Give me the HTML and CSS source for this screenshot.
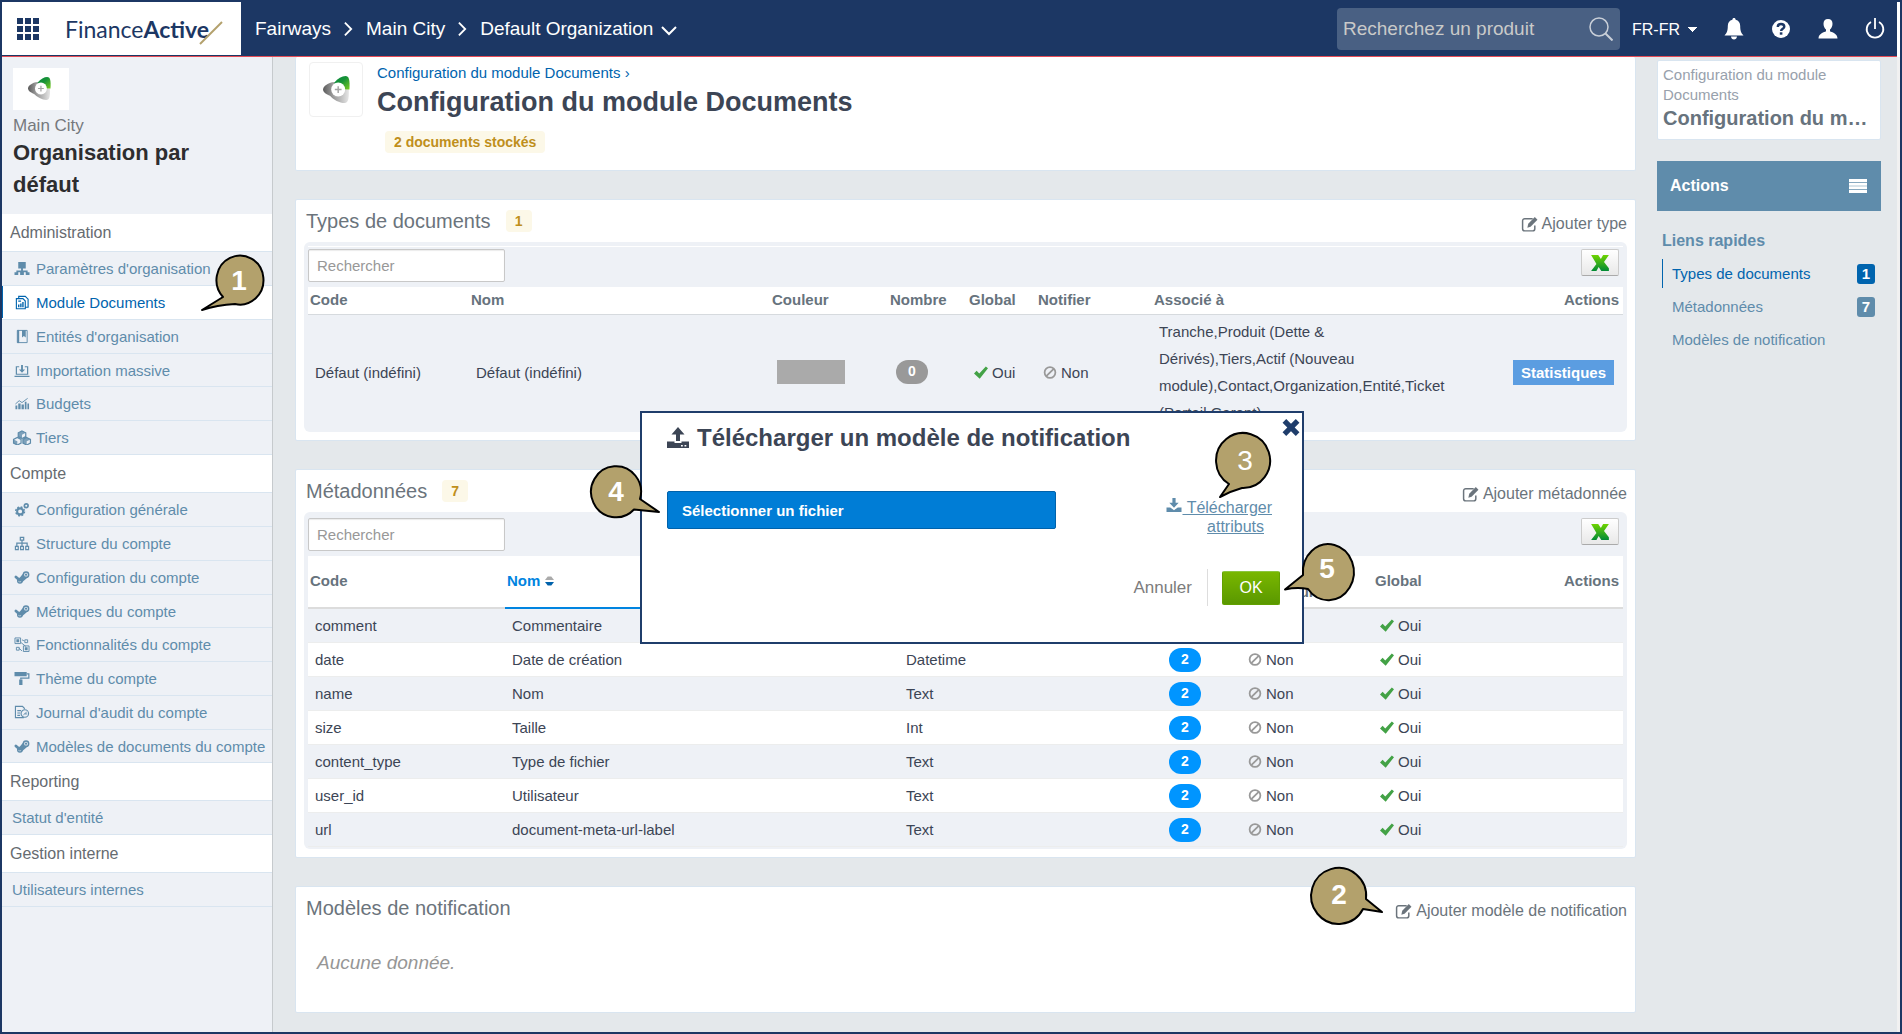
FILE: index.html
```html
<!DOCTYPE html>
<html lang="fr">
<head>
    <meta charset="UTF-8">
    <meta name="viewport" content="width=device-width, initial-scale=1.0">
    <title>Configuration du module Documents</title>
    <link rel="stylesheet" href="styles.css">
</head>
<body>

<!-- Icon sprite -->
<svg class="sprite" aria-hidden="true">
    <defs>
        <linearGradient id="greenFill" x1="0" y1="0" x2="1" y2="1">
            <stop offset="0" stop-color="#0a8a3c"/>
            <stop offset="0.45" stop-color="#169238"/>
            <stop offset="1" stop-color="#7ccb22"/>
        </linearGradient>
        <linearGradient id="greyFill" x1="0" y1="0" x2="1" y2="0">
            <stop offset="0" stop-color="#5a5a5a"/>
            <stop offset="1" stop-color="#b5b5b5"/>
        </linearGradient>
        <linearGradient id="lightFill" x1="0" y1="0" x2="1" y2="0">
            <stop offset="0" stop-color="#868686"/>
            <stop offset="1" stop-color="#e6e6e6"/>
        </linearGradient>
        <linearGradient id="excelFill" x1="0" y1="0" x2="0" y2="1">
            <stop offset="0" stop-color="#6fd400"/>
            <stop offset="1" stop-color="#008a35"/>
        </linearGradient>
    </defs>
    <symbol id="brand" viewBox="0 0 24 24">
        <path fill="url(#lightFill)" d="M6 17C9 21 15 24 19 24c4 0 4-5 4-12H13z"/>
        <path fill="url(#greyFill)" d="M12 5C7 5 0 8 0 12c0 3 5 6 12 7z"/>
        <path fill="url(#greenFill)" d="M10 6C13 2 17 0 20 0c3 0 4 3 3.500 12H13z"/>
        <circle cx="13.500" cy="12" r="6.200" fill="#fff"/>
        <path stroke="#a5a5a5" stroke-width="1.300" d="M13.500 9v6M10.500 12h6"/>
    </symbol>
    <symbol id="chevron" viewBox="0 0 10 16"><path fill="none" stroke="#fff" stroke-width="2" d="M1 1l7 7-7 7"/></symbol>
    <symbol id="chevron-down" viewBox="0 0 16 10"><path fill="none" stroke="#fff" stroke-width="2" d="M1 1l7 7 7-7"/></symbol>
    <symbol id="search" viewBox="0 0 24 24"><circle cx="10" cy="10" r="9" fill="none" stroke="currentColor" stroke-width="1.500"/><path stroke="currentColor" stroke-width="2" d="M16.500 16.500l7 7"/></symbol>
    <symbol id="bell" viewBox="0 0 20 22"><path fill="currentColor" d="M10 0c1 0 1.600.7 1.600 1.700 3 .7 4.600 3 4.600 6.300 0 5 1 7 3.300 9.500H.5C2.800 15 3.800 13 3.800 8c0-3.300 1.600-5.600 4.600-6.300C8.400.7 9 0 10 0zM7 18.500h6c-.2 1.800-1.400 3-3 3s-2.800-1.200-3-3z"/></symbol>
    <symbol id="help" viewBox="0 0 20 20"><circle cx="10" cy="10" r="9" fill="currentColor"/><path fill="none" stroke="#1c3764" stroke-width="2.400" d="M6.800 8c0-2 1.300-3 3.200-3s3.300 1 3.300 2.700c0 2-3.200 2.200-3.200 4.300"/><path fill="#1c3764" d="M8.800 13.300h2.600v2.400H8.800z"/></symbol>
    <symbol id="user" viewBox="0 0 20 20"><path fill="currentColor" d="M10 0c3 0 4.500 2 4.500 4.800 0 2.400-1 4.500-2.500 5.700v1.800c1.500 1 7.500 2 7.500 7.200H.5c0-5.200 6-6.200 7.500-7.200v-1.800C6.500 9.300 5.500 7.200 5.500 4.800 5.500 2 7 0 10 0z"/></symbol>
    <symbol id="power" viewBox="0 0 20 22"><path fill="none" stroke="currentColor" stroke-width="1.800" d="M6 4a8.300 8.300 0 1 0 8 0M10 0v11"/></symbol>
    <symbol id="edit" viewBox="0 0 16 16"><path fill="none" stroke="currentColor" stroke-width="1.400" d="M11 2.500H3.500c-1 0-2 .8-2 2V12c0 1.200 1 2 2 2H11c1.200 0 2-.8 2-2V9"/><path fill="currentColor" d="M13 1l2.500 2.500-6.500 6.500L6 11l.8-3.600z"/></symbol>
    <symbol id="excel" viewBox="0 0 20 18"><path fill="url(#excelFill)" d="M0 0h8l3 4.500L13.500 0H20l-5.500 8 5.500 7v3h-8.500l-3-4.500L6 18H0l6-8z"/></symbol>
    <symbol id="check" viewBox="0 0 16 14"><path fill="#43a246" d="M0 8l3-3 3 3 7.500-8L16 2.200 6.500 14z"/></symbol>
    <symbol id="ban" viewBox="0 0 14 14"><circle cx="7" cy="7" r="5.800" fill="none" stroke="#999" stroke-width="1.900"/><path stroke="#999" stroke-width="1.900" d="M3 11l8-8"/></symbol>
    <symbol id="sort" viewBox="0 0 10 12"><path fill="#aaa" d="M0 5l3-4h4l3 4z"/><path fill="#0062ab" d="M0 7h10l-3 4H3z"/></symbol>
    <symbol id="upload" viewBox="0 0 22 22"><path fill="currentColor" d="M11 0l6.500 7.500H13V14H9V7.500H4.500zM0 14.500h7.500V16h7v-1.500H22V21H0z"/><path stroke="#fff" stroke-width="1.500" d="M14 18.700h1.800M17.500 18.700h1.800"/></symbol>
    <symbol id="download" viewBox="0 0 16 16"><path fill="currentColor" d="M6.300 0h3.400v5H13l-5 5.500L3 5h3.300zM0 10h4l4 3 4-3h4v5H0z"/></symbol>
    <symbol id="close" viewBox="0 0 18 18"><path fill="none" stroke="currentColor" stroke-width="5.500" d="M2 2l14 14M16 2L2 16"/></symbol>
    <symbol id="list" viewBox="0 0 18 14"><path stroke="currentColor" stroke-width="3" d="M0 1.500h18M0 5.200h18M0 8.800h18M0 12.500h18"/></symbol>
    <!-- Sidebar icons -->
    <symbol id="org" viewBox="0 0 16 16"><path fill="currentColor" d="M4 1h8v7H4zM7 8h2v2h5v2H2v-2h5zM0 12h4v3H0zM6 12h4v3H6zM12 12h4v3h-4z"/></symbol>
    <symbol id="docs" viewBox="0 0 16 16"><path fill="none" stroke="currentColor" stroke-width="1.200" d="M4.500 4V1.500h7l3 3V13H12M2 3.800h7l2.500 2.700v8.200H2z"/><path fill="none" stroke="currentColor" stroke-width="1.500" d="M4.500 13v-3M6.800 13V9M9 13V7.500M4 6.500h3"/></symbol>
    <symbol id="book" viewBox="0 0 16 16"><path fill="none" stroke="currentColor" stroke-width="2" d="M4 1v14"/><path fill="none" stroke="currentColor" d="M3 1.500h10.500v13H3z"/><path fill="currentColor" d="M8 1h4v8L10 7.500 8 9z"/></symbol>
    <symbol id="import" viewBox="0 0 16 16"><path fill="none" stroke="currentColor" stroke-width="1.300" d="M5 4H2v8h12V4h-3M0 14.300h16"/><path fill="currentColor" d="M7 2h2v5h2.300L8 10.500 4.700 7H7z"/></symbol>
    <symbol id="chart" viewBox="0 0 16 16"><path fill="currentColor" d="M1 10h2v4H1zM4 8h2.500v6H4zM7.500 9H10v5H7.500zM11 6h1.800v8H11zM13.800 8h1.700v6h-1.700z"/><path fill="none" stroke="currentColor" d="M1 8.500l4-3.500 3 2 6-4.500"/></symbol>
    <symbol id="cubes" viewBox="0 0 20 16"><path fill="none" stroke="currentColor" stroke-width="1.300" d="M10 1l4 2v4l-4 2-4-2V3z M5 8l4 2v4l-4 2-4-2v-4z M15 8l4 2v4l-4 2-4-2v-4z"/><path fill="currentColor" d="M6 3l4 2v4L6 7zM1 10l4 2v4l-4-2zM11 10l4 2v4l-4-2zM10 1l4 2-4 2-4-2zM15 8l4 2-4 2-4-2z" opacity=".8"/></symbol>
    <symbol id="gears" viewBox="0 0 16 16"><circle cx="6" cy="10" r="3.200" fill="none" stroke="currentColor" stroke-width="2.200"/><circle cx="6" cy="10" r="4.700" fill="none" stroke="currentColor" stroke-width="1.500" stroke-dasharray="2 1.700"/><circle cx="12.500" cy="4" r="2" fill="none" stroke="currentColor" stroke-width="1.800"/></symbol>
    <symbol id="tree" viewBox="0 0 16 16"><path fill="none" stroke="currentColor" stroke-width="1.300" d="M6.200 1.500h3.600v3H6.200zM8 4.500V11M2.500 11V7.500h11V11M1 11h3v3.500H1zM6.500 11h3v3.500h-3zM12 11h3v3.500h-3z"/></symbol>
    <symbol id="steam" viewBox="0 0 16 16"><path stroke="currentColor" stroke-width="3" stroke-linecap="round" d="M1.500 7.500l4 3.500"/><path fill="currentColor" d="M9 4l5 4-6 5-4-3z"/><circle cx="5.800" cy="11.500" r="2.400" fill="none" stroke="currentColor" stroke-width="1.500"/><circle cx="12.300" cy="5" r="2.800" fill="#eef1f6" stroke="currentColor" stroke-width="1.600"/><circle cx="12.300" cy="5" r="1.200" fill="currentColor"/></symbol>
    <symbol id="features" viewBox="0 0 16 16"><path fill="none" stroke="currentColor" d="M.5 1h6v6h-6zM9.500 9.500h6v6h-6zM11 3h3v3h-3zM2 11h3v3H2zM7 6l5 4M8 3l2 1M5 12l3 3"/><path fill="currentColor" d="M2 2.500h3v3H2zM11 11h3v3h-3z"/></symbol>
    <symbol id="roller" viewBox="0 0 16 16"><path fill="currentColor" d="M0 1h13v4.500H0zM5 9h3.500v6H5z"/><path fill="none" stroke="currentColor" stroke-width="1.300" d="M13 3h2.300v4.500H6.700V9"/></symbol>
    <symbol id="journal" viewBox="0 0 16 16"><path fill="none" stroke="currentColor" stroke-width="1.200" d="M10 13.500H1V1.500h7.500L11 4M3 6h4M3 8.500h3M3 11h3"/><circle cx="11" cy="9" r="4" fill="none" stroke="currentColor" stroke-width="1.200"/><path fill="none" stroke="currentColor" d="M9.500 10.500L13 7.500M11 9.500h2.500"/></symbol>
</svg>

<!-- Top bar -->
<header class="topbar">
    <div class="topbar-logo">
        <button class="apps" type="button" aria-label="Applications">
            <i></i><i></i><i></i><i></i><i></i><i></i><i></i><i></i><i></i>
        </button>
        <a class="wordmark" href="#">Finance<b>Active</b></a>
        <svg class="slash" viewBox="0 0 24 24"><path stroke="#b3a16c" stroke-width="2" d="M1 23L23 1"/></svg>
    </div>
    <nav class="crumbs">
        <a href="#">Fairways</a>
        <svg class="crumb-sep"><use href="#chevron"/></svg>
        <a href="#">Main City</a>
        <svg class="crumb-sep"><use href="#chevron"/></svg>
        <a class="crumb-current" href="#">Default Organization <svg class="crumb-down"><use href="#chevron-down"/></svg></a>
    </nav>
    <div class="product-search">
        <input type="text" placeholder="Recherchez un produit" aria-label="Recherchez un produit">
        <svg><use href="#search"/></svg>
    </div>
    <select class="lang" aria-label="Langue"><option>FR-FR</option></select>
    <div class="tools">
        <a href="#" aria-label="Notifications"><svg><use href="#bell"/></svg></a>
        <a href="#" aria-label="Aide"><svg><use href="#help"/></svg></a>
        <a href="#" aria-label="Profil"><svg><use href="#user"/></svg></a>
        <a href="#" aria-label="Déconnexion"><svg><use href="#power"/></svg></a>
    </div>
</header>

<div class="layout">

    <!-- Sidebar -->
    <aside class="sidebar">
        <div class="org">
            <div class="org-logo"><svg><use href="#brand"/></svg></div>
            <div class="org-parent">Main City</div>
            <h2>Organisation par défaut</h2>
        </div>
        <nav>
            <h3>Administration</h3>
            <ul>
                <li><a href="#"><svg><use href="#org"/></svg>Paramètres d'organisation</a></li>
                <li class="active">
                    <a href="#"><svg><use href="#docs"/></svg>Module Documents</a>
                    <svg class="callout callout-1" viewBox="-45 -32 90 70">
                        <path d="M-16 17A23.500 24.500 0 1 1-4 24Q-22 25-37 30Z"/><text y="10">1</text>
                    </svg>
                </li>
                <li><a href="#"><svg><use href="#book"/></svg>Entités d'organisation</a></li>
                <li><a href="#"><svg><use href="#import"/></svg>Importation massive</a></li>
                <li><a href="#"><svg><use href="#chart"/></svg>Budgets</a></li>
                <li><a href="#"><svg><use href="#cubes"/></svg>Tiers</a></li>
            </ul>
            <h3>Compte</h3>
            <ul>
                <li><a href="#"><svg><use href="#gears"/></svg>Configuration générale</a></li>
                <li><a href="#"><svg><use href="#tree"/></svg>Structure du compte</a></li>
                <li><a href="#"><svg><use href="#steam"/></svg>Configuration du compte</a></li>
                <li><a href="#"><svg><use href="#steam"/></svg>Métriques du compte</a></li>
                <li><a href="#"><svg><use href="#features"/></svg>Fonctionnalités du compte</a></li>
                <li><a href="#"><svg><use href="#roller"/></svg>Thème du compte</a></li>
                <li><a href="#"><svg><use href="#journal"/></svg>Journal d'audit du compte</a></li>
                <li><a href="#"><svg><use href="#steam"/></svg>Modèles de documents du compte</a></li>
            </ul>
            <h3>Reporting</h3>
            <ul>
                <li><a href="#">Statut d'entité</a></li>
            </ul>
            <h3>Gestion interne</h3>
            <ul>
                <li><a href="#">Utilisateurs internes</a></li>
            </ul>
        </nav>
    </aside>

    <!-- Main content -->
    <main class="content">
        <section class="card card-title">
            <div class="module-logo"><svg><use href="#brand"/></svg></div>
            <div>
                <a class="back" href="#">Configuration du module Documents ›</a>
                <h1>Configuration du module Documents</h1>
                <span class="tag tag-stock">2 documents stockés</span>
            </div>
        </section>

        <section class="card">
            <div class="card-head">
                <h2>Types de documents</h2>
                <span class="tag">1</span>
                <a class="add" href="#"><svg><use href="#edit"/></svg>Ajouter type</a>
            </div>
            <div class="panel panel-types">
                <div class="panel-bar">
                    <input type="text" placeholder="Rechercher" aria-label="Rechercher un type">
                    <button class="export" type="button" aria-label="Exporter vers Excel"><svg><use href="#excel"/></svg></button>
                </div>
                <table>
                    <colgroup>
                        <col class="w-code"><col><col class="w-color"><col class="w-count"><col class="w-bool"><col class="w-notify"><col class="w-assoc"><col class="w-actions">
                    </colgroup>
                    <thead>
                        <tr><th>Code</th><th>Nom</th><th>Couleur</th><th>Nombre</th><th>Global</th><th>Notifier</th><th>Associé à</th><th class="right">Actions</th></tr>
                    </thead>
                    <tbody>
                        <tr>
                            <td>Défaut (indéfini)</td>
                            <td>Défaut (indéfini)</td>
                            <td><span class="swatch"></span></td>
                            <td><span class="pill pill-grey">0</span></td>
                            <td><svg class="mark"><use href="#check"/></svg>Oui</td>
                            <td><svg class="mark"><use href="#ban"/></svg>Non</td>
                            <td>Tranche,Produit (Dette &amp; Dérivés),Tiers,Actif (Nouveau module),Contact,Organization,Entité,Ticket (Portail Garant)</td>
                            <td class="right"><button class="btn-stats" type="button">Statistiques</button></td>
                        </tr>
                    </tbody>
                </table>
            </div>
        </section>

        <section class="card">
            <div class="card-head">
                <h2>Métadonnées</h2>
                <span class="tag">7</span>
                <a class="add" href="#"><svg><use href="#edit"/></svg>Ajouter métadonnée</a>
            </div>
            <div class="panel panel-meta">
                <div class="panel-bar">
                    <input type="text" placeholder="Rechercher" aria-label="Rechercher une métadonnée">
                    <button class="export" type="button" aria-label="Exporter vers Excel"><svg><use href="#excel"/></svg></button>
                </div>
                <table>
                    <colgroup>
                        <col class="w-search"><col><col class="w-type"><col class="w-number"><col class="w-user"><col class="w-global"><col class="w-last">
                    </colgroup>
                    <thead>
                        <tr><th>Code</th><th class="sorted">Nom <svg><use href="#sort"/></svg></th><th>Type</th><th></th><th>Valeur<br>utilisateur</th><th>Global</th><th class="right">Actions</th></tr>
                    </thead>
                    <tbody>
                        <tr><td>comment</td><td>Commentaire</td><td>Text</td><td><span class="pill">2</span></td><td><svg class="mark"><use href="#ban"/></svg>Non</td><td><svg class="mark"><use href="#check"/></svg>Oui</td><td></td></tr>
                        <tr><td>date</td><td>Date de création</td><td>Datetime</td><td><span class="pill">2</span></td><td><svg class="mark"><use href="#ban"/></svg>Non</td><td><svg class="mark"><use href="#check"/></svg>Oui</td><td></td></tr>
                        <tr><td>name</td><td>Nom</td><td>Text</td><td><span class="pill">2</span></td><td><svg class="mark"><use href="#ban"/></svg>Non</td><td><svg class="mark"><use href="#check"/></svg>Oui</td><td></td></tr>
                        <tr><td>size</td><td>Taille</td><td>Int</td><td><span class="pill">2</span></td><td><svg class="mark"><use href="#ban"/></svg>Non</td><td><svg class="mark"><use href="#check"/></svg>Oui</td><td></td></tr>
                        <tr><td>content_type</td><td>Type de fichier</td><td>Text</td><td><span class="pill">2</span></td><td><svg class="mark"><use href="#ban"/></svg>Non</td><td><svg class="mark"><use href="#check"/></svg>Oui</td><td></td></tr>
                        <tr><td>user_id</td><td>Utilisateur</td><td>Text</td><td><span class="pill">2</span></td><td><svg class="mark"><use href="#ban"/></svg>Non</td><td><svg class="mark"><use href="#check"/></svg>Oui</td><td></td></tr>
                        <tr><td>url</td><td>document-meta-url-label</td><td>Text</td><td><span class="pill">2</span></td><td><svg class="mark"><use href="#ban"/></svg>Non</td><td><svg class="mark"><use href="#check"/></svg>Oui</td><td></td></tr>
                    </tbody>
                </table>
            </div>
        </section>

        <section class="card">
            <div class="card-head">
                <h2>Modèles de notification</h2>
                <a class="add" href="#"><svg><use href="#edit"/></svg>Ajouter modèle de notification</a>
            </div>
            <p class="empty">Aucune donnée.</p>
            <svg class="callout callout-2" viewBox="-45 -32 90 70">
                <path d="M27 4A27.500 28 0 1 0 24 14L43 17Z"/><text y="9">2</text>
            </svg>
        </section>
    </main>

    <!-- Right column -->
    <aside class="side">
        <div class="side-title">
            <span>Configuration du module Documents</span>
            <strong>Configuration du module Documents</strong>
        </div>
        <button class="side-actions" type="button">Actions <svg><use href="#list"/></svg></button>
        <h3>Liens rapides</h3>
        <ul>
            <li class="active"><a href="#">Types de documents</a><span>1</span></li>
            <li><a href="#">Métadonnées</a><span>7</span></li>
            <li><a href="#">Modèles de notification</a></li>
        </ul>
    </aside>
</div>

<!-- Upload dialog -->
<div class="modal" role="dialog" aria-labelledby="modalTitle">
    <button class="modal-close" type="button" aria-label="Fermer"><svg><use href="#close"/></svg></button>
    <h2 id="modalTitle"><svg><use href="#upload"/></svg>Télécharger un modèle de notification</h2>
    <div class="modal-row">
        <button class="btn-file" type="button">Sélectionner un fichier</button>
        <a class="attributes" href="#"><svg><use href="#download"/></svg> Télécharger<br><span>attributs</span></a>
    </div>
    <div class="modal-foot">
        <button class="btn-cancel" type="button">Annuler</button>
        <button class="btn-ok" type="button">OK</button>
    </div>
    <svg class="callout callout-3" viewBox="-45 -32 90 70">
        <path d="M-16 23A27 27.500 0 1 1-3 27Q-14 30-25 36Z"/><text class="thin" y="9">3</text>
    </svg>
    <svg class="callout callout-4" viewBox="-45 -32 90 70">
        <path d="M24 7A25 25.500 0 1 0 18 17.500L43 20Z"/><text y="9">4</text>
    </svg>
    <svg class="callout callout-5" viewBox="-45 -32 90 70">
        <path d="M-24 6A25.500 28 0 1 1-19 20Q-30 18-42 20.500Z"/><text y="9">5</text>
    </svg>
</div>

</body>
</html>
```
FILE: styles.css
```css
/* General Styling */
* {
    box-sizing: border-box;
}

body {
    margin: 0;
    min-height: 100vh;
    border: 2px solid #1c3764;
    position: relative;
    display: flex;
    flex-direction: column;
    background: #e4e8eb;
    font-family: "Liberation Sans", Arial, sans-serif;
    font-size: 15px;
    color: #3c4555;
}

h1, h2, h3, p, ul {
    margin: 0;
    padding: 0;
}

ul {
    list-style: none;
}

a {
    color: inherit;
    text-decoration: none;
}

button, input, select {
    font-family: inherit;
    margin: 0;
}

button {
    cursor: pointer;
}

.sprite {
    position: absolute;
    width: 0;
    height: 0;
}

/* Top bar */
.topbar {
    display: flex;
    align-items: center;
    height: 55px;
    margin-right: 3px;
    padding-right: 12px;
    background: #1c3764;
    border-bottom: 1px solid #e64c56;
    box-shadow: 3px 0 #fff;
    color: #fff;
}

.topbar-logo {
    display: flex;
    align-items: center;
    align-self: flex-start;
    width: 239px;
    height: 53px;
    padding-left: 15px;
    background: #fff;
}

.apps {
    display: grid;
    grid-template-columns: repeat(3, 6px);
    gap: 2px;
    padding: 0;
    border: none;
    background: none;
}

.apps i {
    height: 6px;
    background: #1c3764;
}

.wordmark {
    margin-left: 26px;
    font-family: Lato, sans-serif;
    font-size: 23px;
    color: #1c3764;
}

.slash {
    width: 24px;
    height: 24px;
    margin: 8px 0 0 -10px;
}

.crumbs {
    display: flex;
    align-items: center;
    gap: 13px;
    margin-left: 14px;
    font-size: 19px;
}

.crumb-sep {
    width: 9px;
    height: 16px;
}

.crumb-current {
    display: flex;
    align-items: center;
    gap: 8px;
}

.crumb-down {
    width: 16px;
    height: 10px;
    margin-top: 4px;
}

.product-search {
    display: flex;
    align-items: center;
    width: 283px;
    height: 42px;
    margin-left: auto;
    padding: 0 7px 0 6px;
    border-radius: 4px;
    background: #496083;
    color: #c9cfd8;
}

.product-search input {
    flex: 1;
    min-width: 0;
    padding: 0;
    border: none;
    background: none;
    font-size: 19px;
    color: #fff;
}

.product-search input::placeholder {
    color: #c9cac9;
    opacity: 1;
}

.product-search svg {
    width: 24px;
    height: 24px;
}

.lang {
    appearance: none;
    width: 68px;
    margin-left: 12px;
    padding: 0;
    border: none;
    background: conic-gradient(from 315deg at 50% 100%, #fff 90deg, transparent 0) no-repeat right 3px center / 9px 5px;
    font-size: 16px;
    color: #fff;
}

.tools {
    display: flex;
    gap: 27px;
    margin-left: 24px;
}

.tools svg {
    display: block;
    width: 20px;
    height: 22px;
}

/* Columns */
.layout {
    flex: 1;
    display: flex;
    align-items: flex-start;
    padding-right: 16px;
    border-right: 3px solid #f1f1f1;
}

/* Sidebar */
.sidebar {
    align-self: stretch;
    flex: none;
    width: 271px;
    background: #eef1f6;
    border-right: 1px solid #c6cacd;
}

.org {
    padding: 11px 11px 13px;
}

.org-logo {
    display: flex;
    align-items: center;
    justify-content: center;
    width: 56px;
    height: 42px;
    margin-bottom: 5px;
    padding: 0 3px 2px 0;
    background: #fff;
}

.org-logo svg {
    width: 23px;
    height: 23px;
}

.org-parent {
    font-size: 17px;
    line-height: 22px;
    color: #75797d;
}

.org h2 {
    font-size: 22px;
    line-height: 32px;
    color: #2d2d2f;
}

.sidebar h3 {
    height: 38px;
    padding-left: 8px;
    background: #fff;
    border-bottom: 1px solid #d9e5f0;
    font-size: 16px;
    font-weight: normal;
    line-height: 37px;
    color: #666b70;
}

.sidebar li {
    position: relative;
    height: 34px;
    border-bottom: 1px solid #d9e5f0;
}

.sidebar li:nth-child(4n) {
    height: 33px;
}

.sidebar li a {
    display: flex;
    align-items: center;
    gap: 4px;
    height: 32px;
    padding-left: 10px;
    color: #5f8cab;
    white-space: nowrap;
}

.sidebar li a svg {
    width: 20px;
    height: 15px;
}

.sidebar li.active {
    background: #fff;
}

.sidebar li.active a {
    padding-left: 9px;
    border-left: 1px solid #0064ae;
    color: #0064ae;
}

/* Cards */
.content {
    flex: 1;
    min-width: 0;
    display: flex;
    flex-direction: column;
    gap: 28px;
    padding: 0 21px 18px 22px;
}

.card {
    position: relative;
    padding: 0 8px 8px;
    background: #fff;
    border: 1px solid #d9e5f0;
    border-radius: 2px;
}

.card-title {
    display: flex;
    gap: 14px;
    padding: 5px 13px 17px;
    border-top: none;
}

.module-logo {
    display: flex;
    align-items: center;
    justify-content: center;
    width: 54px;
    height: 55px;
    border: 1px solid #f0f0f0;
    border-radius: 4px;
}

.module-logo svg {
    width: 27px;
    height: 27px;
}

.back {
    display: block;
    line-height: 22px;
    color: #0064ae;
}

h1 {
    margin-bottom: 11px;
    font-size: 27px;
    line-height: 36px;
}

.tag {
    display: inline-block;
    min-width: 26px;
    padding: 0 9px;
    border-radius: 4px;
    background: #fcf8e8;
    font-size: 14px;
    font-weight: bold;
    line-height: 22px;
    text-align: center;
    color: #bf8f1c;
}

.tag-stock {
    margin-left: 8px;
}

.card-head {
    display: flex;
    height: 42px;
    padding: 0 0 0 2px;
    line-height: 42px;
}

.card-head h2 {
    font-size: 20px;
    font-weight: normal;
    color: #6b747c;
}

.card-head .tag {
    align-self: center;
    margin-left: 15px;
}

.add {
    display: flex;
    align-items: center;
    gap: 4px;
    height: 48px;
    margin-left: auto;
    font-size: 16px;
    color: #6b747c;
}

.add svg {
    width: 17px;
    height: 17px;
}

.empty {
    height: 75px;
    padding-left: 13px;
    font-size: 19px;
    font-style: italic;
    line-height: 68px;
    color: #969696;
}

/* Panels */
.panel {
    padding: 6px 4px 2px;
    border-radius: 6px;
    background: #eef1f6;
}

.panel-types {
    padding: 4px 4px 3px;
}

.panel-types .panel-bar {
    height: 41px;
    padding-top: 2px;
    border-top: 1px solid #fff;
}

.panel-bar {
    display: flex;
    align-items: flex-start;
    justify-content: space-between;
    height: 38px;
    padding-right: 4px;
}

.panel-bar input {
    width: 197px;
    height: 33px;
    padding: 0 8px;
    border: 1px solid #c8c8c8;
    border-radius: 2px;
    box-shadow: inset 0 1px 1px rgba(0,0,0,0.08);
    font-size: 15px;
}

.panel-bar input::placeholder {
    color: #989898;
    opacity: 1;
}

.export {
    display: flex;
    align-items: center;
    justify-content: center;
    width: 38px;
    height: 27px;
    padding: 0;
    border: 1px solid #ccc;
    border-bottom-color: #aaa;
    border-radius: 2px;
    background: linear-gradient(#fff, #e8e8e8);
}

.export svg {
    width: 20px;
    height: 16px;
}

/* Tables */
table {
    width: 100%;
    table-layout: fixed;
    border-collapse: separate;
    border-spacing: 0;
}

th {
    padding: 2px 4px 3px 2px;
    background: #fff;
    border-bottom: 1px solid #d6dade;
    line-height: 22px;
    text-align: left;
    color: #67737d;
}

td {
    height: 34px;
    padding: 3px 9px 3px 7px;
    border-bottom: 1px solid #eceded;
    line-height: 27px;
}

.right {
    text-align: right;
}

.panel-types td {
    border-bottom: none;
}

.panel-meta th {
    height: 53px;
    border-bottom: 2px solid #dcdcdc;
}

.panel-meta .sorted {
    border-bottom-color: #0084e0;
    color: #0084e0;
}

.sorted svg {
    width: 9px;
    height: 12px;
    vertical-align: -1px;
}

.panel-meta tbody tr:nth-child(even) td {
    background: #fff;
}

.w-code { width: 161px; }
.w-color { width: 118px; }
.w-count { width: 79px; }
.w-bool { width: 69px; }
.w-notify { width: 116px; }
.w-assoc { width: 306px; }
.w-actions { width: 165px; }
.w-search { width: 197px; }
.w-type { width: 262px; }
.w-number { width: 80px; }
.w-user { width: 132px; }
.w-global { width: 130px; }
.w-last { width: 120px; }

.mark {
    width: 14px;
    height: 13px;
    margin-right: 4px;
    vertical-align: -1px;
}

.swatch {
    display: block;
    width: 68px;
    height: 24px;
    background: #aaa;
}

.pill {
    display: block;
    width: 32px;
    height: 24px;
    margin-left: 1px;
    border-radius: 12px;
    background: #0095ff;
    font-size: 14px;
    font-weight: bold;
    line-height: 23px;
    text-align: center;
    color: #fff;
}

.pill-grey {
    background: #999;
}

.btn-stats {
    height: 25px;
    padding: 0 8px;
    border: none;
    background: #5b9de1;
    font-size: 15px;
    font-weight: bold;
    color: #fff;
}

/* Right column */
.side {
    flex: none;
    width: 224px;
    padding-top: 3px;
    color: #5f8cab;
}

.side-title {
    padding: 4px 7px 8px 5px;
    background: #fff;
    border: 1px solid #d9e5f0;
    border-radius: 2px;
    line-height: 20px;
    color: #98a1ac;
}

.side-title span {
    display: block;
}

.side-title strong {
    display: block;
    overflow: hidden;
    font-size: 20px;
    line-height: 26px;
    text-overflow: ellipsis;
    white-space: nowrap;
    color: #67737d;
}

.side-actions {
    display: flex;
    align-items: center;
    justify-content: space-between;
    width: 100%;
    height: 50px;
    margin: 21px 0 18px;
    padding: 0 14px 0 13px;
    border: none;
    background: #5f8cab;
    font-size: 16px;
    font-weight: bold;
    color: #fff;
}

.side-actions svg {
    width: 18px;
    height: 14px;
}

.side h3 {
    padding-left: 5px;
    font-size: 16px;
    line-height: 24px;
}

.side ul {
    padding: 6px 6px 0 5px;
}

.side li {
    display: flex;
    align-items: center;
    justify-content: space-between;
    height: 29px;
    margin-bottom: 4px;
    padding-left: 10px;
}

.side li span {
    width: 18px;
    border-radius: 3px;
    background: #5f8cab;
    font-weight: bold;
    line-height: 20px;
    text-align: center;
    color: #fff;
}

.side li.active {
    padding-left: 9px;
    border-left: 1px solid #0064ae;
    color: #0064ae;
}

.side li.active span {
    background: #0064ae;
}

/* Upload dialog */
.modal {
    position: absolute;
    top: 409px;
    left: calc(50% - 311px);
    width: 664px;
    height: 233px;
    padding: 7px 22px 0 25px;
    background: #fff;
    border: 2px solid #1f3d6b;
}

.modal h2 {
    display: flex;
    align-items: center;
    gap: 8px;
    font-size: 24px;
    line-height: 36px;
}

.modal h2 svg {
    width: 22px;
    height: 22px;
}

.modal-close {
    position: absolute;
    top: 6px;
    right: 2px;
    padding: 0;
    border: none;
    background: none;
    color: #1f3d6b;
}

.modal-close svg {
    display: block;
    width: 18px;
    height: 17px;
}

.modal-row {
    display: flex;
    justify-content: space-between;
    margin-top: 35px;
    padding-right: 8px;
}

.btn-file {
    width: 389px;
    height: 38px;
    padding: 0 14px;
    border: 1px solid #0062ab;
    border-radius: 2px;
    background: #007dd6;
    font-size: 15px;
    font-weight: bold;
    text-align: left;
    color: #fff;
}

.attributes {
    margin-top: 7px;
    font-size: 16px;
    line-height: 19px;
    text-align: right;
    text-decoration: underline;
    color: #5f8cab;
}

.attributes svg {
    width: 16px;
    height: 15px;
}

.attributes span {
    margin-right: 8px;
}

.modal-foot {
    display: flex;
    align-items: center;
    justify-content: flex-end;
    gap: 14px;
    margin-top: 33px;
}

.btn-cancel {
    height: 37px;
    padding: 0 15px 0 0;
    border: none;
    border-right: 1px solid #ddd;
    background: none;
    font-size: 17px;
    color: #7c7c7c;
}

.btn-ok {
    width: 58px;
    height: 34px;
    padding: 0;
    border: 1px solid #62a000;
    border-top-color: #8cc63f;
    border-radius: 2px;
    background: linear-gradient(#79b700, #5a9800);
    font-size: 16px;
    color: #fff;
}

/* Numbered callouts */
.callout {
    position: absolute;
    z-index: 2;
    width: 90px;
    height: 70px;
}

.callout path {
    fill: #b3a16c;
    stroke: #000;
    stroke-width: 2;
    stroke-linejoin: round;
}

.callout text {
    fill: #fff;
    font-size: 28px;
    font-weight: bold;
    text-anchor: middle;
}

.callout .thin {
    font-weight: normal;
}

.callout-1 {
    top: -38px;
    left: 192px;
}

.callout-2 {
    top: -24px;
    right: 251px;
}

.callout-3 {
    top: 16px;
    right: 12px;
}

.callout-4 {
    top: 47px;
    left: -71px;
}

.callout-5 {
    top: 124px;
    right: -70px;
}
```
